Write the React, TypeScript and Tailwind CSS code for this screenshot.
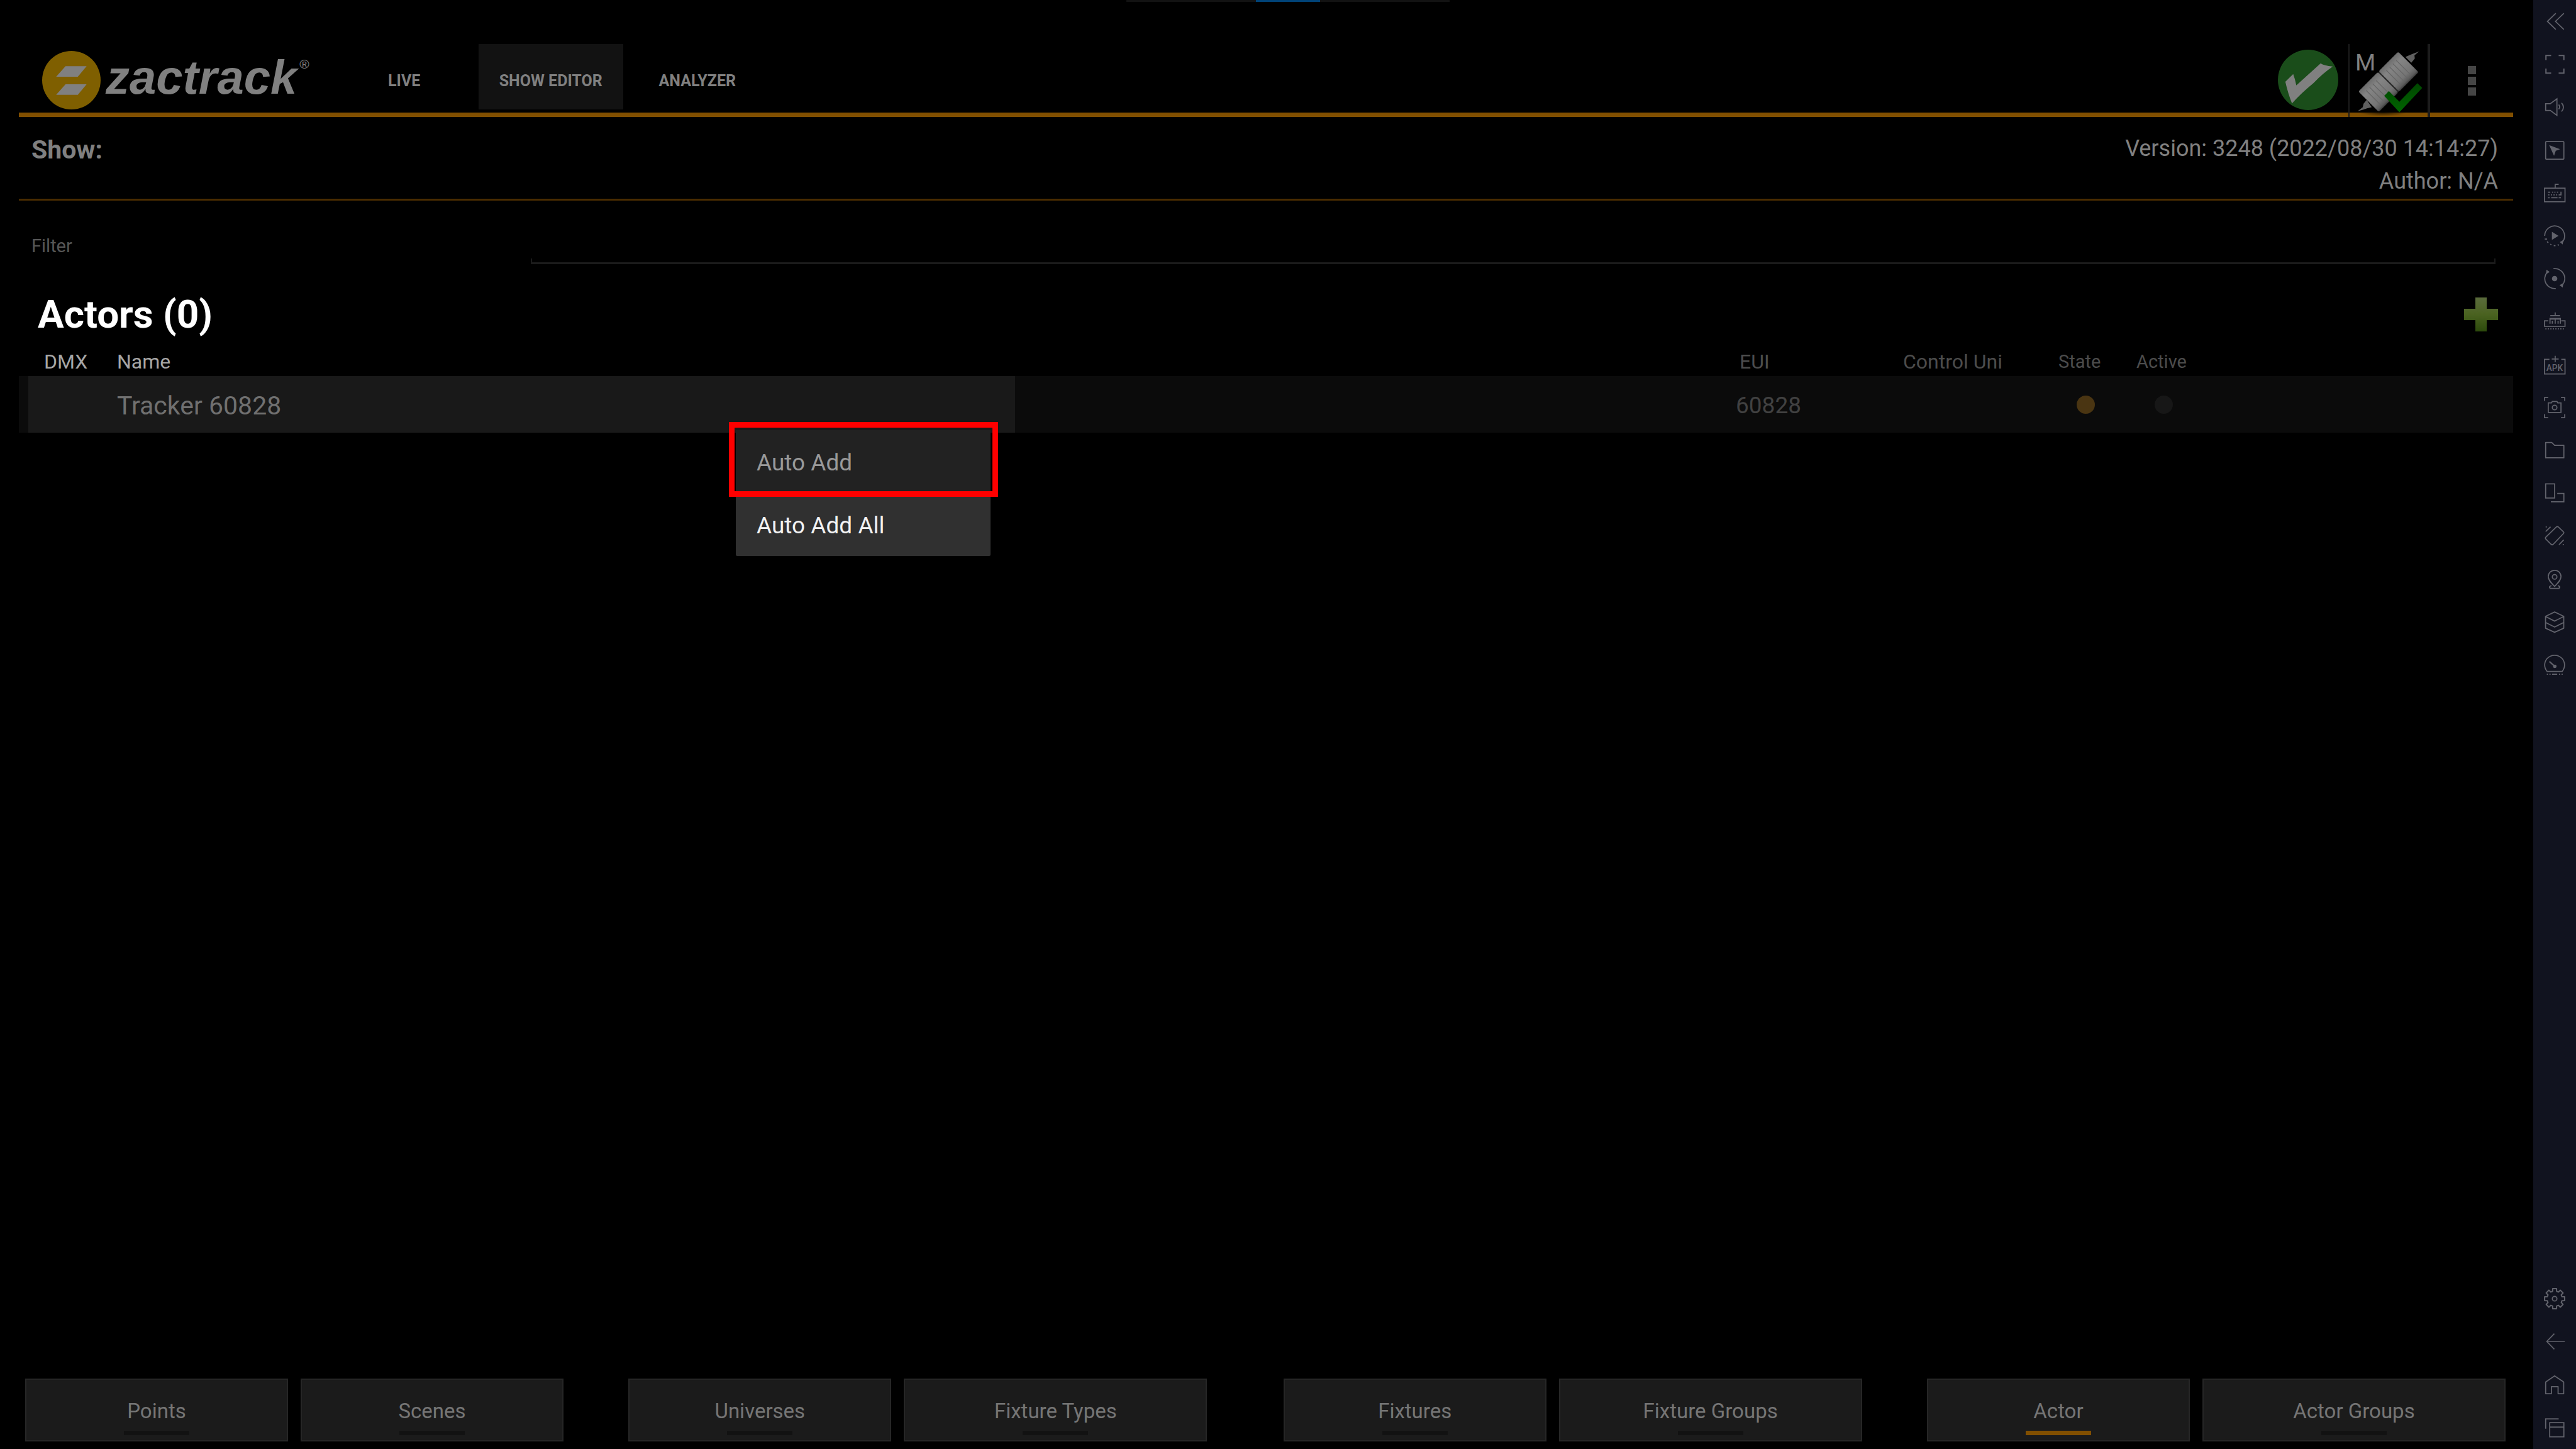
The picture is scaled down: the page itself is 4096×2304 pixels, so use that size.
import type { ReactNode } from "react";

const gearPath = (() => {
  const points: string[] = [];
  const teeth = 8;
  for (let i = 0; i < teeth; i++) {
    const base = (i / teeth) * Math.PI * 2 - Math.PI / 2;
    const corners: [number, number][] = [
      [-0.27, 13.2],
      [-0.19, 17.6],
      [0.19, 17.6],
      [0.27, 13.2],
    ];
    corners.forEach(([offset, radius]) => {
      const x = 18.5 + Math.cos(base + offset) * radius;
      const y = 18.5 + Math.sin(base + offset) * radius;
      points.push(x.toFixed(1) + " " + y.toFixed(1));
    });
  }
  return "M" + points.join("L") + "Z";
})();

type Tool = { label: string; art: ReactNode };

const tools: Tool[] = [
  { label: "Collapse", art: <path d="M20.5 4.5 6 18.5l14.5 14M34.5 4.5 20 18.5l14.5 14" /> },
  {
    label: "Full screen",
    art: <path strokeWidth="2.2" d="M3.5 11.500V3.500h9M25.500 3.500h9v8M34.500 26v8h-9M12.500 34h-9v-8" />,
  },
  {
    label: "Volume",
    art: <path d="M3 13h8l11.500-8.500v28.500L11 24.500H3zM25.500 14.500q3.500 4 0 8M30.500 11.500q6.500 7.500 0 15" />,
  },
  {
    label: "Lock cursor",
    art: (
      <>
        <rect x="3" y="3.500" width="31.500" height="30.500" rx="1" />
        <path d="M9 9.500 28 16.500l-7.500 2.800L17.500 28z" fill="currentColor" stroke="none" />
      </>
    ),
  },
  {
    label: "Game controls",
    art: (
      <>
        <rect x="1" y="10" width="35.500" height="23.500" />
        <path d="M19.500 10V3.500h6" />
        <path d="M7 17h4M14 17h2M18 17h2M22.500 17h2M7.500 21.700h2M12 21.700h2M16.500 21.700h2M21 21.700h2M25.500 21.700h4V16M7 26.500h3M12.500 26.500h11M25.500 26.500h4" />
      </>
    ),
  },
  {
    label: "Sync operations",
    art: (
      <>
        <path d="M1.300 18.500a17.200 17.200 0 1 1 30.500 11" />
        <path d="M33.500 25.500l-1 8-5-4z" fill="currentColor" stroke="none" />
        <path d="M1.500 24h4M5.500 28.500l2 2M11 33l2 1M17 35.500h3M24.500 33l.5 2.500" />
        <path d="M13.800 11.500v14l11.500-7z" fill="currentColor" stroke="none" />
      </>
    ),
  },
  {
    label: "Record operations",
    art: (
      <>
        <path d="M16.500 1.300A17.200 17.200 0 0 1 32 29.500M20.500 35.700A17.200 17.200 0 0 1 5.500 7.500" />
        <path d="M33.500 26l-1 8-5.500-4zM3.500 11l1-8 5.500 4z" fill="currentColor" stroke="none" />
        <circle cx="18.500" cy="18.500" r="4.700" fill="currentColor" stroke="none" />
      </>
    ),
  },
  {
    label: "Clean up",
    art: (
      <>
        <path d="M19.500 3v5.500M11 8.500h17M7.500 17.500H1V27h35.500v-9.500H30M10.500 22.500v-9h18v9M14.500 22.500v-5M19.500 22.500v-9M24.500 22.500v-5M11 14.500h17" />
        <path d="M2.500 31.500h32" strokeDasharray="2 2.300" />
      </>
    ),
  },
  {
    label: "Install APK",
    art: (
      <>
        <path d="M9.500 9H1v25.500h35.500V9H30M19.500 3v11M13.500 8.500h12" />
        <text
          x="18.500"
          y="29"
          textAnchor="middle"
          fontSize="15"
          fontWeight="500"
          fontFamily="Roboto, sans-serif"
          fill="currentColor"
          stroke="none"
        >
          APK
        </text>
      </>
    ),
  },
  {
    label: "Screenshot",
    art: (
      <>
        <path d="M1 7V1.200h6.500M29.500 1.200H36V7M36 30v6h-6.500M7.500 36H1v-6" />
        <path d="M7.500 10.500H13l1.500-2.500h8l1.500 2.500h5.500v16.500h-22z" />
        <circle cx="18.500" cy="18.500" r="4" />
      </>
    ),
  },
  { label: "Media folder", art: <path d="M3 5h10.500l5 5h16v21.500H3z" strokeLinejoin="round" /> },
  { label: "Multi-window", art: <path d="M3 2.500h15.500v24.500H3zM23 19.300h11.500v14.200H12" /> },
  {
    label: "Shake",
    art: (
      <>
        <path
          strokeLinejoin="round"
          d="M21.500 3.200q1.700-1.500 3.400 0l8.800 8.300q1.600 1.500 0 3.200L16 33.200q-1.700 1.600-3.400 0L3.300 24q-1.500-1.700 0-3.300z"
        />
        <path d="M11.500 2.800 3 11M34.300 25.500l-8.300 8.500M3 3h2M32.500 33.500h2" />
      </>
    ),
  },
  {
    label: "Location",
    art: (
      <>
        <path d="M18.500 31C13 25 7.500 20.500 7.500 14a11 11 0 0 1 22 0c0 6.500-5.500 11-11 17z" />
        <circle cx="18.500" cy="14.500" r="4" />
        <path d="M13 29.500c-5 1.500-4 5 0 5h11c4 0 5-3.500 0-5" />
      </>
    ),
  },
  {
    label: "Instance manager",
    art: (
      <path
        strokeLinejoin="round"
        d="M18.500 1.200 34.300 8.700v20.500L18.500 36.300 2.800 29.200V8.700zM2.800 9l15.700 8 15.800-8M2.800 19.300l15.700 8 15.800-8"
      />
    ),
  },
  {
    label: "Performance",
    art: (
      <>
        <path d="M5.500 30C-2 21 1 8 11.500 3.500a18 18 0 0 1 14 0C36 8 39 21 31.500 30z" strokeLinejoin="round" />
        <path d="M9.500 13l9 8" strokeWidth="2.400" />
        <circle cx="18.800" cy="21.300" r="3" fill="currentColor" stroke="none" />
        <path d="M5 35h2M9.500 35h2M14 35h9M26 35h2M30.500 35h2" />
      </>
    ),
  },
];

const systemTools: Tool[] = [
  {
    label: "Settings",
    art: (
      <>
        <path d={gearPath} strokeLinejoin="round" strokeWidth="2.200" />
        <circle cx="18.500" cy="18.500" r="4" />
      </>
    ),
  },
  { label: "Back", art: <path d="M36 18.500H5.500M18 5 5 18.500 18 32" /> },
  {
    label: "Home",
    art: <path strokeLinejoin="round" d="M3 13.500 18.500 3l15.700 10.500v20.300h-9.700V21.500H13v12.300H3z" />,
  },
  { label: "Recent apps", art: <path d="M3 20.500v-17h22.500M10 10h24.500v24.300H10zM10 17.500h24.500" /> },
];

function ToolButton({ label, art }: Tool) {
  return (
    <button type="button" aria-label={label} className="flex items-center justify-center text-[#62636c]">
      <svg viewBox="0 0 37 37" className="size-[34px] overflow-visible" fill="none" stroke="currentColor" strokeWidth="1.900">
        {art}
      </svg>
    </button>
  );
}

function SideBar() {
  return (
    <aside className="flex w-[68px] shrink-0 flex-col justify-between bg-[#11131f]">
      <div className="grid h-[1091px] auto-rows-fr">
        {tools.map((tool) => (
          <ToolButton key={tool.label} {...tool} />
        ))}
      </div>
      <div className="grid h-[273px] auto-rows-fr">
        {systemTools.map((tool) => (
          <ToolButton key={tool.label} {...tool} />
        ))}
      </div>
    </aside>
  );
}

function Logo() {
  return (
    <a href="#home" aria-label="zactrack" className="flex text-[#808080]">
      <svg viewBox="0 0 100 100" className="mt-[11px] size-[93px]">
        <circle cx="50" cy="50" r="50" fill="#7f5f00" />
        <path d="M40 26h36L61 44H24zM40 57h36L61 75H24z" fill="#808080" />
      </svg>
      <span className="ml-2 mt-[9px] font-['Liberation_Sans',sans-serif] text-[76px] leading-[88px] font-bold italic">
        zactrack
      </span>
      <span className="ml-1 mt-[20px] font-['Liberation_Sans',sans-serif] text-[21px] leading-6">®</span>
    </a>
  );
}

function TrackerIcon() {
  return (
    <svg viewBox="459 46 399 374" className="h-[116px] w-[124px]">
      <defs>
        <linearGradient id="body" x1="0" y1="0" x2="0" y2="1">
          <stop offset="0" stopColor="#6c6c6c" />
          <stop offset="0.25" stopColor="#848484" />
          <stop offset="0.75" stopColor="#757575" />
          <stop offset="0.92" stopColor="#5c5c5c" />
          <stop offset="1" stopColor="#3a3a3a" />
        </linearGradient>
        <linearGradient id="tick" x1="0" y1="0" x2="0" y2="1">
          <stop offset="0" stopColor="#004700" />
          <stop offset="1" stopColor="#006400" />
        </linearGradient>
        <radialGradient id="shade">
          <stop offset="0" stopColor="#000" stopOpacity="0.6" />
          <stop offset="1" stopColor="#000" stopOpacity="0" />
        </radialGradient>
      </defs>
      <ellipse cx="630" cy="398" rx="120" ry="18" fill="url(#shade)" />
      <path d="M745 112l28-12 14-6 28-10-24 20 2 16-18 22zM572 370l-24 6-18 6-30 8 26-20 4-18 16-20z" fill="#606060" />
      <g transform="translate(658 240) rotate(-45)">
        <rect x="-144" y="-74" width="141" height="148" rx="8" fill="url(#body)" />
        <rect x="3" y="-74" width="141" height="148" rx="8" fill="url(#body)" />
        <g stroke="#666666" strokeWidth="4">
          <path d="M-112-50v100M-88-50v100M-64-50v100M-40-50v100M34-50v100M58-50v100M82-50v100M106-50v100" />
        </g>
        <path d="M0-72V72" stroke="#2e2e2e" strokeWidth="5" />
      </g>
      <path d="M660 287l54 55 92-95 25 24-117 125-78-84z" fill="url(#tick)" />
      <text x="488" y="180" fontSize="119" fontFamily="Roboto, sans-serif" fill="#808080">
        M
      </text>
    </svg>
  );
}

const tabs = [
  { label: "LIVE", active: false },
  { label: "SHOW EDITOR", active: true },
  { label: "ANALYZER", active: false },
];

function Header() {
  return (
    <header className="mt-[70px] flex h-[116px] justify-between border-b-[7px] border-[#814f00] pl-[37px]">
      <div className="flex">
        <Logo />
        <nav className="ml-[55px] flex gap-[22px]">
          {tabs.map((tab) => (
            <button
              key={tab.label}
              type="button"
              className={
                tab.active
                  ? "h-[104px] min-w-[192px] bg-[#121212] px-[33px] pt-[14px] text-[25px] font-bold text-[#808080]"
                  : "h-[104px] min-w-[192px] px-[33px] pt-[14px] text-[25px] font-bold text-[#808080]"
              }
            >
              {tab.label}
            </button>
          ))}
        </nav>
      </div>
      <div className="-mb-[7px] flex">
        <button type="button" aria-label="System status" className="mr-4 flex pt-[9px]">
          <svg viewBox="92 76 308 308" className="size-[96px]">
            <circle cx="246" cy="230" r="154" fill="#1a4d1a" />
            <path d="M130 240l40-40q10 26 16 58l124-112q16 12 62 16-50 34-98 84-68 56-110 104-20-48-34-110z" fill="#808080" />
          </svg>
        </button>
        <button type="button" aria-label="Tracker status" className="border-l-2 border-r-4 border-[#1c1c1c]">
          <TrackerIcon />
        </button>
        <button type="button" aria-label="More options" className="flex w-[132px] flex-col items-center gap-1 pt-[35px]">
          <span className="size-[13px] bg-[#454545]" />
          <span className="size-[13px] bg-[#454545]" />
          <span className="size-[13px] bg-[#454545]" />
        </button>
      </div>
    </header>
  );
}

function ActorTable() {
  return (
    <div className="relative mt-3">
      <table className="w-full table-fixed border-separate border-spacing-0 text-left">
        <colgroup>
          <col className="w-[156px]" />
          <col className="w-[36%]" />
          <col />
          <col className="w-[266px]" />
          <col className="w-[247px]" />
          <col className="w-[124px]" />
          <col className="w-[599px]" />
        </colgroup>
        <thead>
          <tr className="h-[50px] text-[32px] leading-[46px] text-[#4c4c4c] *:pt-1 *:font-normal">
            <th className="pl-[40px] text-[#a6a6a6]">DMX</th>
            <th className="text-[#a6a6a6]">Name</th>
            <td />
            <th className="pl-[6px]">EUI</th>
            <th>Control Uni</th>
            <th className="text-[29px]">State</th>
            <th className="text-[29px]">Active</th>
          </tr>
        </thead>
        <tbody>
          <tr className="h-[90px] bg-[#0b0b0b] text-[41px] leading-[60px]">
            <td className="border-l-[15px] border-[#0b0b0b] bg-[#191919]" />
            <td className="bg-[#191919] pt-1 text-[#707070]">Tracker 60828</td>
            <td />
            <td className="pt-1 text-[37px] text-[#414141]">60828</td>
            <td />
            <td>
              <span role="img" aria-label="Warning" className="ml-[29px] block size-[29px] rounded-full bg-[#4a3512]" />
            </td>
            <td>
              <span role="img" aria-label="Inactive" className="ml-[29px] block size-[29px] rounded-full bg-[#171717]" />
            </td>
          </tr>
        </tbody>
      </table>
      <div role="menu" className="absolute top-[136px] left-[1140px] flex w-[405px] flex-col text-[37px]">
        <button type="button" role="menuitem" className="h-[100px] bg-[#222222] px-[33px] pt-1 text-left text-[#999999]">
          Auto Add
        </button>
        <button type="button" role="menuitem" className="h-[100px] rounded-b-xs bg-[#303030] px-[33px] pt-1 text-left text-[#f2f2f2]">
          Auto Add All
        </button>
      </div>
      <div className="pointer-events-none absolute top-[123px] left-[1129px] h-[119px] w-[428px] border-[9px] border-[#ff0000]" />
    </div>
  );
}

const footerGroups = [
  ["Points", "Scenes"],
  ["Universes", "Fixture Types"],
  ["Fixtures", "Fixture Groups"],
  ["Actor", "Actor Groups"],
];

function Footer() {
  return (
    <footer className="mt-auto flex justify-between pr-3 pb-3 pl-[10px]">
      {footerGroups.map((group, index) => (
        <div key={group[0]} className={index === 2 ? "ml-[18px] flex gap-5" : "flex gap-5"}>
          {group.map((label) => (
            <button
              key={label}
              type="button"
              className={
                label.includes(" ")
                  ? "relative h-[100px] w-[482px] border-2 border-[#262626] bg-[#1b1b1b] pt-1 text-[33px] text-[#757575]"
                  : "relative h-[100px] w-[418px] border-2 border-[#262626] bg-[#1b1b1b] pt-1 text-[33px] text-[#757575]"
              }
            >
              {label}
              <span
                className={
                  label === "Actor"
                    ? "absolute inset-x-0 bottom-2 mx-auto h-[7px] w-[104px] bg-[#814f00]"
                    : "absolute inset-x-0 bottom-2 mx-auto h-[7px] w-[104px] bg-[#121212]"
                }
              />
            </button>
          ))}
        </div>
      ))}
    </footer>
  );
}

export default function App() {
  return (
    <div className="relative flex min-h-screen bg-black font-[Roboto,sans-serif]">
      <div className="absolute top-0 left-1/2 h-[3px] w-[514px] -translate-x-1/2 bg-[#121212]">
        <div className="mx-auto h-full w-[102px] bg-[#004378]" />
      </div>
      <main className="flex min-w-0 flex-1 flex-col pr-8 pl-[30px]">
        <Header />
        <section className="flex h-[133px] justify-between border-b-[3px] border-[#4a2c00] pt-6 pr-6 pl-5 text-[#808080]">
          <h2 className="text-[41px] leading-[56px] font-bold">Show:</h2>
          <div className="text-right text-[36px] leading-[52px]">
            <p>Version: 3248 (2022/08/30 14:14:27)</p>
            <p>Author: N/A</p>
          </div>
        </section>
        <div className="flex h-[101px] pr-7 pl-[20px]">
          <label htmlFor="filter" className="w-[794px] shrink-0 pt-[52px] text-[29px] leading-10 text-[#565656]">
            Filter
          </label>
          <div className="flex flex-1 flex-col">
            <input id="filter" type="text" className="h-[92px] w-full bg-transparent px-4 text-[36px] text-[#808080] outline-none" />
            <div className="h-[9px] border-x-2 border-b-[3px] border-[#1b1b1b]" />
          </div>
        </div>
        <div className="mt-11 flex h-[72px] items-center justify-between pr-6 pl-[30px]">
          <h1 className="text-[62px] leading-[72px] font-bold text-white">Actors (0)</h1>
          <button type="button" aria-label="Add actor">
            <svg viewBox="0 0 54 54" className="size-[54px]">
              <defs>
                <linearGradient id="plus" x1="0" y1="0" x2="0" y2="1">
                  <stop offset="0" stopColor="#5a6b3c" />
                  <stop offset="0.500" stopColor="#4a6220" />
                  <stop offset="1" stopColor="#2c4a0c" />
                </linearGradient>
              </defs>
              <path d="M18 0h18v18h18v18H36v18H18V36H0V18h18z" fill="url(#plus)" />
            </svg>
          </button>
        </div>
        <ActorTable />
        <Footer />
      </main>
      <SideBar />
    </div>
  );
}
